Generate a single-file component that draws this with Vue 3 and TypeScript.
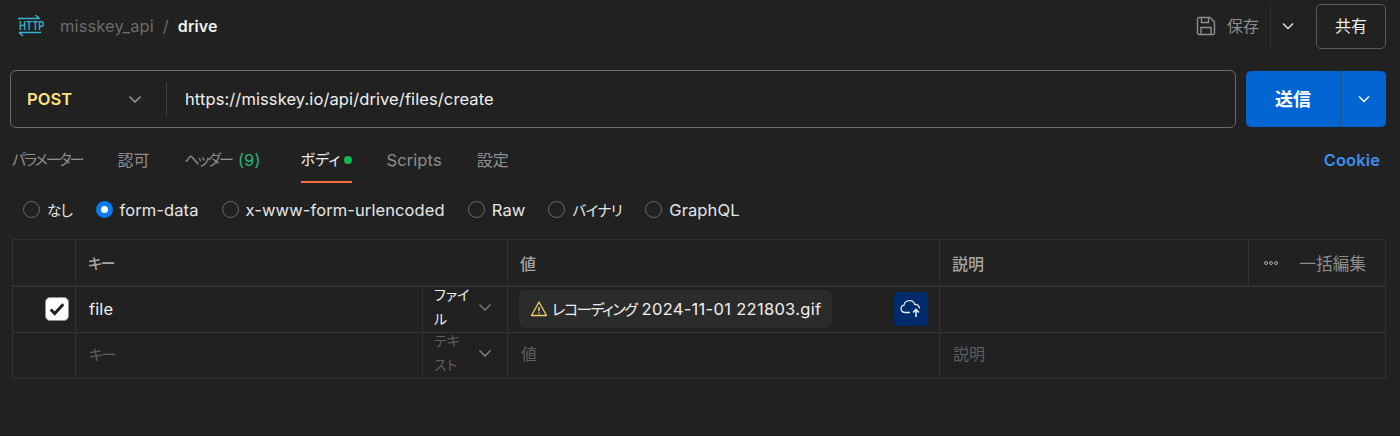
<script setup lang="ts">
const tabs = [
  { label: 'パラメーター', kind: 'kana tight' },
  { label: '認可', kind: 'kanji' },
  { label: 'ヘッダー', kind: 'kana tight', count: '(9)' },
  { label: 'ボディ', kind: 'kana loose', active: true },
  { label: 'Scripts', kind: '' },
  { label: '設定', kind: 'kanji' },
]
const radios = [
  { label: 'なし', kind: 'kana' },
  { label: 'form-data', kind: '', on: true },
  { label: 'x-www-form-urlencoded', kind: '' },
  { label: 'Raw', kind: '' },
  { label: 'バイナリ', kind: 'kana' },
  { label: 'GraphQL', kind: '' },
]
</script>

<template>
  <div class="page">
    <header class="top">
      <div class="crumbs">
        <div class="logo">
          <svg width="24" height="6" viewBox="0 0 24 6" fill="none">
            <path d="M1 3.500H22.500M18.500 0L22.500 3.500" stroke="#35b3cf" stroke-width="1.500" />
          </svg>
          <span class="http">HTTP</span>
          <svg width="24" height="6" viewBox="0 0 24 6" fill="none">
            <path d="M2 1.500H24M2 1.500L6 5" stroke="#35b3cf" stroke-width="1.500" />
          </svg>
        </div>
        <span class="coll">misskey_api</span>
        <span class="slash">/</span>
        <span class="name">drive</span>
      </div>
      <div class="actions">
        <svg class="save-ic" width="20" height="20" viewBox="0 0 20 20" fill="none" stroke="#8e8e8e" stroke-width="1.400">
          <path d="M1.500 3A1.500 1.500 0 0 1 3 1.500H14L18.500 6V17A1.500 1.500 0 0 1 17 18.500H3A1.500 1.500 0 0 1 1.500 17Z" />
          <path d="M5.500 1.500V6.500H12.500V1.500M5 18.500V11.500H15V18.500" />
        </svg>
        <span class="save cjk">保存</span>
        <span class="save-split">
          <svg width="14" height="14" viewBox="0 0 14 14" fill="none" stroke="#e6e6e6" stroke-width="1.400"><path d="M2 4.500L7 9.500L12 4.500" /></svg>
        </span>
        <button class="share cjk">共有</button>
      </div>
    </header>

    <section class="req">
      <div class="urlbar">
        <div class="method">
          <span>POST</span>
          <svg width="14" height="14" viewBox="0 0 14 14" fill="none" stroke="#a6a6a6" stroke-width="1.300"><path d="M1.500 4.500L7 10L12.500 4.500" /></svg>
        </div>
        <div class="url">https://misskey.io/api/drive/files/create</div>
      </div>
      <div class="send">
        <span class="send-main">送信</span>
        <span class="send-more">
          <svg width="14" height="14" viewBox="0 0 14 14" fill="none" stroke="#fff" stroke-width="1.400"><path d="M2 4.500L7 9.500L12 4.500" /></svg>
        </span>
      </div>
    </section>

    <nav class="tabs">
      <div class="tablist">
        <div v-for="t in tabs" :key="t.label" class="tab" :class="{ active: t.active }">
          <span :class="t.kind">{{ t.label }}</span>
          <span v-if="t.count" class="count">{{ t.count }}</span>
          <span v-if="t.active" class="dot"></span>
        </div>
      </div>
      <span class="cookie">Cookie</span>
    </nav>

    <div class="radios">
      <label v-for="r in radios" :key="r.label" class="radio">
        <span class="ring" :class="{ on: r.on }"></span>
        <span :class="r.kind">{{ r.label }}</span>
      </label>
    </div>

    <div class="table">
      <div class="row head">
        <div class="c c-check"></div>
        <div class="c c-key"><span class="kana key">キー</span></div>
        <div class="c c-val cjk">値</div>
        <div class="c c-desc cjk">説明</div>
        <div class="c c-bulk">
          <span class="dots"><i></i><i></i><i></i></span>
          <span>一括編集</span>
        </div>
      </div>
      <div class="row data">
        <div class="c c-check">
          <span class="check">
            <svg width="16" height="14" viewBox="0 0 14 12" fill="none" stroke="#212121" stroke-width="2.600"><path d="M1.500 6.500L5 10L12.500 1.800" /></svg>
          </span>
        </div>
        <div class="c c-key filled">file</div>
        <div class="c c-type">
          <span class="type-text">ファイ<br />ル</span>
          <svg width="14" height="14" viewBox="0 0 14 14" fill="none" stroke="#7f7f7f" stroke-width="1.300"><path d="M1.500 4.500L7 10L12.500 4.500" /></svg>
        </div>
        <div class="c c-val file-cell">
          <div class="chip">
            <svg width="18" height="18" viewBox="0 0 18 18" fill="none" stroke="#f2cf74" stroke-width="1.300">
              <path d="M9 2L16.500 15.500H1.500Z" stroke-linejoin="round" />
              <path d="M9 7V11.200M9 12.600V13.800" stroke-width="1.500" />
            </svg>
            <span><span class="kana chipk">レコーディング</span> 2024-11-01 221803.gif</span>
          </div>
          <span class="upload">
            <svg width="24" height="22" viewBox="0 0 24 22" fill="none" stroke="#e3e8f2" stroke-width="1.300">
              <path d="M11 14.500H5.500A3.700 3.700 0 0 1 5 7.200A5.600 5.600 0 0 1 15.800 6.500A4 4 0 0 1 20.500 10.500" />
              <path d="M17 19V12M14 14.500L17 11.500L20 14.500" stroke-width="1.600" />
            </svg>
          </span>
        </div>
        <div class="c c-rest"></div>
      </div>
      <div class="row data last">
        <div class="c c-check"></div>
        <div class="c c-key ph"><span class="kana key">キー</span></div>
        <div class="c c-type muted">
          <span class="type-text">テキ<br />スト</span>
          <svg width="14" height="14" viewBox="0 0 14 14" fill="none" stroke="#8c8c8c" stroke-width="1.300"><path d="M1.500 4.500L7 10L12.500 4.500" /></svg>
        </div>
        <div class="c c-val ph cjk">値</div>
        <div class="c c-rest ph cjk">説明</div>
      </div>
    </div>
  </div>
</template>

<style>
body {
  margin: 0;
  background: #212121;
}
</style>

<style scoped>
.page {
  height: 436px;
  overflow: hidden;
  background: #212121;
  color: #e6e6e6;
  font-family: Inter, "Noto Sans CJK JP", sans-serif;
  font-size: 16.500px;
  letter-spacing: 0.100px;
  font-feature-settings: "palt";
  box-sizing: border-box;
}
.cjk,
.kanji {
  font-size: 16px;
  letter-spacing: 0;
}
.kanji {
  margin-bottom: 2px;
}
.kana {
  font-size: 14.500px;
  letter-spacing: -0.500px;
}
.kana.tight {
  font-size: 15px;
  letter-spacing: -2px;
  margin-bottom: 2px;
}
.kana.loose {
  font-size: 15px;
  letter-spacing: 0.300px;
  margin-bottom: 2px;
}
.kana.key {
  font-size: 15px;
  letter-spacing: -1.500px;
}
.kana.chipk {
  font-size: 15px;
  letter-spacing: -1.300px;
}
.top {
  height: 52px;
  display: flex;
  align-items: center;
  justify-content: space-between;
  padding: 0 14px 0 17px;
}
.crumbs {
  display: flex;
  align-items: center;
}
.logo {
  width: 28px;
  margin-right: 15px;
  display: flex;
  flex-direction: column;
}
.http {
  display: block;
  width: 24px;
  height: 10px;
  padding-left: 2px;
  font-size: 12px;
  line-height: 10px;
  font-weight: 600;
  letter-spacing: 0;
  color: #35b3cf;
  white-space: nowrap;
  transform: scaleX(0.78);
  transform-origin: 2px 0;
}
.coll {
  color: #6b6b6b;
}
.slash {
  color: #6b6b6b;
  margin: 0 9px;
}
.name {
  color: #f2f2f2;
  font-weight: 600;
  font-size: 16px;
}
.actions {
  display: flex;
  align-items: center;
}
.save-ic {
  margin-right: 11px;
}
.save {
  color: #8e8e8e;
  margin-right: 11px;
  padding-bottom: 2px;
}
.save-split {
  height: 44px;
  width: 34px;
  display: flex;
  align-items: center;
  justify-content: center;
  border-left: 1px solid #2e2e2e;
  box-sizing: border-box;
  margin-right: 12px;
}
.share {
  width: 70px;
  height: 45px;
  background: transparent;
  border: 1px solid #5a5a5a;
  border-radius: 5px;
  color: #f0f0f0;
  font-family: inherit;
  font-feature-settings: inherit;
  padding: 0 0 2px;
}
.req {
  display: flex;
  gap: 10px;
  padding: 18px 14px 0 10px;
  align-items: center;
}
.urlbar {
  flex: 1;
  height: 58px;
  box-sizing: border-box;
  border: 1px solid #6b6b6b;
  border-radius: 6px;
  display: flex;
  align-items: center;
}
.method {
  width: 156px;
  height: 34px;
  box-sizing: border-box;
  display: flex;
  align-items: center;
  justify-content: space-between;
  padding: 0 24px 0 16px;
  border-right: 1px solid #3d3d3d;
  color: #ffe47e;
  font-weight: 600;
}
.url {
  padding-left: 18px;
  color: #f0f0f0;
}
.send {
  width: 140px;
  height: 56px;
  display: flex;
  background: #0265d2;
  border-radius: 5px;
  color: #fff;
  font-weight: 700;
  font-size: 18px;
}
.send-main {
  width: 95px;
  display: flex;
  align-items: center;
  justify-content: center;
  border-right: 1px solid #1b4f8c;
  box-sizing: border-box;
  padding-bottom: 2px;
}
.send-more {
  flex: 1;
  display: flex;
  align-items: center;
  justify-content: center;
}
.tabs {
  display: flex;
  justify-content: space-between;
  align-items: flex-start;
  padding: 0 20px 0 12px;
  height: 55px;
}
.tablist {
  display: flex;
  gap: 35px;
}
.tab {
  height: 55px;
  box-sizing: border-box;
  padding-top: 10px;
  display: flex;
  align-items: center;
  gap: 6px;
  color: #8e8e8e;
  white-space: nowrap;
  border-bottom: 2px solid transparent;
}
.tab.active {
  color: #f0f0f0;
  border-bottom-color: #ff6c37;
  gap: 4px;
  margin: 0 -1px 0 5px;
}
.count {
  color: #26b47f;
}
.dot {
  width: 8px;
  height: 8px;
  border-radius: 50%;
  background: #0cbb52;
}
.cookie {
  color: #3d8fe8;
  font-weight: 600;
  line-height: 65px;
}
.radios {
  display: flex;
  gap: 23px;
  height: 56px;
  align-items: center;
  padding: 0 0 3px 23px;
  box-sizing: border-box;
}
.radio {
  display: flex;
  align-items: center;
  gap: 7px;
  color: #e6e6e6;
}
.ring {
  width: 17px;
  height: 17px;
  box-sizing: border-box;
  border: 1.500px solid #6b6b6b;
  border-radius: 50%;
}
.ring.on {
  border: 5px solid #097bed;
  background: #fff;
}
.table {
  margin: 0 14px 0 12px;
  border: 1px solid #303030;
}
.row {
  display: grid;
  grid-template-columns: 63px 347px 85px 432px 1fr;
  grid-template-rows: minmax(0, 1fr);
  height: 46px;
  border-bottom: 1px solid #303030;
  box-sizing: border-box;
}
.row.head {
  grid-template-columns: 63px 432px 432px 309px 1fr;
  height: 47px;
  border-bottom-width: 2px;
  color: #a6a6a6;
  font-weight: 500;
}
.row.last {
  border-bottom: 0;
  height: 45px;
}
.c {
  display: flex;
  align-items: center;
  padding-left: 12px;
  border-right: 1px solid #303030;
  box-sizing: border-box;
  min-width: 0;
  min-height: 0;
}
.c:last-child {
  border-right: 0;
}
.row.data .c {
  padding-bottom: 2px;
}
.row.data .c.ph,
.row.data .c.c-type {
  padding-bottom: 5px;
}
.c-check {
  justify-content: flex-end;
  padding: 0 6px 0 0;
}
.check {
  width: 24px;
  height: 24px;
  box-sizing: border-box;
  border: 1px solid #8e8e8e;
  border-radius: 5px;
  background: #fff;
  display: flex;
  align-items: center;
  justify-content: center;
}
.filled {
  padding-left: 13px;
  color: #f0f0f0;
}
.ph {
  color: #5e5e5e;
  padding-left: 13px;
}
.c-type {
  justify-content: space-between;
  padding: 0 15px 0 11px;
  font-size: 14px;
  letter-spacing: 0;
  line-height: 24px;
  color: #f0f0f0;
}
.c-type.muted {
  color: #5e5e5e;
}
.type-text {
  width: 34px;
  white-space: nowrap;
}
.file-cell {
  justify-content: space-between;
  padding: 0 11px 0 11px;
}
.chip {
  height: 38px;
  box-sizing: border-box;
  display: flex;
  align-items: center;
  gap: 4px;
  padding: 0 11px 0 11px;
  background: #2b2b2b;
  border-radius: 6px;
  color: #f0f0f0;
  white-space: nowrap;
  letter-spacing: 0.300px;
}
.upload {
  width: 34px;
  height: 34px;
  display: flex;
  align-items: center;
  justify-content: center;
  background: #002b6b;
  border-radius: 4px;
}
.c-bulk {
  justify-content: space-between;
  padding: 0 19px 0 15px;
  font-weight: 400;
  color: #8e8e8e;
}
.dots {
  display: flex;
  gap: 1px;
}
.dots i {
  width: 4px;
  height: 4px;
  box-sizing: border-box;
  border: 1px solid #a6a6a6;
  border-radius: 50%;
}
</style>
